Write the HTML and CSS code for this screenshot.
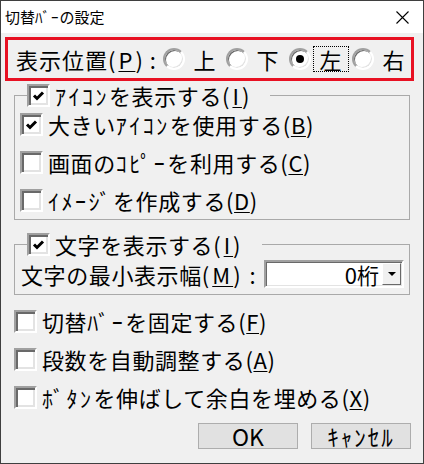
FILE: index.html
```html
<!DOCTYPE html>
<html lang="ja">
<head>
  <meta charset="UTF-8" />
  <title>切替ﾊﾞｰの設定</title>
  <link rel="stylesheet" href="styles.css">
</head>
<body>
  <div class="window">
    <div class="titlebar">
      <span class="title">切替<span class="hw-title">ﾊﾞｰ</span>の設定</span>
      <svg class="close" width="13" height="13" viewBox="0 0 13 13">
        <path d="M0.5 0.5 L12.5 12.5 M12.5 0.5 L0.5 12.5" stroke="#000" stroke-width="1.1" fill="none"/>
      </svg>
    </div>

    <div class="content">
      <!-- Position row (highlighted) -->
      <div class="position-row">
        <span class="pos-label">表示位置<span class="wide">(<u>P</u>)</span></span><span class="colon">:</span>
        <span class="radio-opt"><span class="radio"></span><span class="opt-text">上</span></span>
        <span class="radio-opt"><span class="radio"></span><span class="opt-text">下</span></span>
        <span class="radio-opt"><span class="radio on"></span><span class="opt-text focus">左</span></span>
        <span class="radio-opt"><span class="radio"></span><span class="opt-text">右</span></span>
      </div>

      <!-- Icon group -->
      <fieldset class="group group-icon">
        <legend class="group-legend">
          <span class="cb on"><svg width="19" height="19" viewBox="0 0 19 19"><path d="M5 9.5 L8 12.5 L14 6.5" stroke="#000" stroke-width="3" fill="none"/></svg></span>
          <span class="cb-text"><span class="hw">ｱｲｺﾝ</span>を表示する<span class="wide">(<u>I</u>)</span></span>
        </legend>
        <div class="check-row">
          <span class="cb on"><svg width="19" height="19" viewBox="0 0 19 19"><path d="M5 9.5 L8 12.5 L14 6.5" stroke="#000" stroke-width="3" fill="none"/></svg></span>
          <span class="cb-text">大きい<span class="hw">ｱｲｺﾝ</span>を使用する(<u>B</u>)</span>
        </div>
        <div class="check-row">
          <span class="cb"></span>
          <span class="cb-text">画面の<span class="hw">ｺﾋﾟｰ</span>を利用する(<u>C</u>)</span>
        </div>
        <div class="check-row">
          <span class="cb"></span>
          <span class="cb-text"><span class="hw">ｲﾒｰｼﾞ</span>を作成する(<u>D</u>)</span>
        </div>
      </fieldset>

      <!-- Text group -->
      <fieldset class="group group-text">
        <legend class="group-legend">
          <span class="cb on"><svg width="19" height="19" viewBox="0 0 19 19"><path d="M5 9.5 L8 12.5 L14 6.5" stroke="#000" stroke-width="3" fill="none"/></svg></span>
          <span class="cb-text">文字を表示する<span class="wide">(<u>I</u>)</span></span>
        </legend>
        <div class="width-row">
          <span class="width-label">文字の最小表示幅<span class="wide">(<u>M</u>)</span><span class="colon">:</span></span>
          <div class="combo">
            <span class="combo-value">0桁</span>
            <span class="combo-btn"><span class="arrow"></span></span>
          </div>
        </div>
      </fieldset>

      <!-- Other options -->
      <div class="options">
        <div class="check-row">
          <span class="cb"></span>
          <span class="cb-text">切替<span class="hw">ﾊﾞｰ</span>を固定する(<u>F</u>)</span>
        </div>
        <div class="check-row">
          <span class="cb"></span>
          <span class="cb-text">段数を自動調整する(<u>A</u>)</span>
        </div>
        <div class="check-row">
          <span class="cb"></span>
          <span class="cb-text"><span class="hw">ﾎﾞﾀﾝ</span>を伸ばして余白を埋める(<u>X</u>)</span>
        </div>
      </div>

      <div class="buttons">
        <button class="btn">OK</button>
        <button class="btn"><span class="hw-btn">ｷｬﾝｾﾙ</span></button>
      </div>
    </div>
  </div>
</body>
</html>
```

FILE: styles.css
```css
body {
  margin: 0;
  font-family: "Noto Sans CJK JP", "Noto Sans", sans-serif;
  color: #000;
}

.window {
  width: 424px;
  height: 464px;
  box-sizing: border-box;
  border: 1px solid #3f3f3f;
  background: #f0f0f0;
  display: flex;
  flex-direction: column;
}

.titlebar {
  height: 32px;
  flex: none;
  background: #fff;
  display: flex;
  align-items: center;
  justify-content: space-between;
  padding: 0 14px 0 4px;
}

.title {
  font-size: 15px;
  line-height: 20px;
}

.hw-title {
  letter-spacing: 1px;
}

.content {
  display: flex;
  flex-direction: column;
  font-size: 22px;
  line-height: 23px;
  letter-spacing: 0.6px;
}

.hw {
  letter-spacing: 2.5px;
}

.wide {
  letter-spacing: 3px;
}

u {
  text-decoration-thickness: 1px;
  text-underline-offset: 2px;
}

/* Position row */
.position-row {
  margin: 4px 9px 0 4px;
  height: 44px;
  box-sizing: border-box;
  border: 3px solid #e81123;
  display: flex;
  align-items: center;
  padding-left: 8px;
  white-space: nowrap;
}

.pos-label {
  flex: none;
  letter-spacing: 1px;
}

.colon {
  margin: 0 6px 0 4px;
}

.radio-opt {
  display: flex;
  align-items: center;
  flex: none;
  margin-right: 3px;
}

.radio {
  width: 22px;
  height: 22px;
  box-sizing: border-box;
  border-radius: 50%;
  border: 2px solid;
  border-color: #a0a0a0 #fff #fff #a0a0a0;
  box-shadow: inset 1px 1px 0 #696969, inset -1px -1px 0 #e3e3e3;
  background: #fff;
  display: flex;
  align-items: center;
  justify-content: center;
}

.radio.on::after {
  content: '';
  width: 8px;
  height: 8px;
  border-radius: 50%;
  background: #000;
}

.opt-text {
  margin-left: 2px;
  padding: 0 6px;
  border: 1px dotted transparent;
  line-height: 24px;
  letter-spacing: 0;
}

.opt-text.focus {
  border-color: #000;
}

/* Group boxes */
.group {
  margin: 0;
  min-width: 0;
  border: 1px solid #a9a9a9;
}

.group-icon {
  margin: 3px 13px 0 13px;
  padding: 6px 0 7px 5px;
  display: flex;
  flex-direction: column;
  gap: 15px;
}

.group-text {
  margin: 13px 13px 0 13px;
  padding: 4px 5px 6px 6px;
}

.group-legend {
  display: flex;
  align-items: center;
  padding: 0 18px 0 0;
  margin-left: 7px;
}

.group-text .group-legend {
  margin-left: 6px;
}

.check-row {
  display: flex;
  align-items: center;
  height: 23px;
}

.cb {
  width: 23px;
  height: 23px;
  flex: none;
  box-sizing: border-box;
  border: 2px solid;
  border-color: #a0a0a0 #fff #fff #a0a0a0;
  box-shadow: inset 2px 2px 0 #696969, inset -2px -2px 0 #e3e3e3;
  background: #fff;
}

.cb svg {
  display: block;
}

.cb-text {
  margin-left: 5px;
  white-space: nowrap;
}

/* Minimum width row */
.width-row {
  display: flex;
  align-items: center;
}

.width-label {
  white-space: nowrap;
}

.width-label .colon {
  margin: 0 0 0 6px;
}

.combo {
  margin-left: auto;
  width: 140px;
  height: 28px;
  flex: none;
  box-sizing: border-box;
  border: 2px solid;
  border-color: #a0a0a0 #fff #fff #a0a0a0;
  box-shadow: inset 1px 1px 0 #696969, inset -1px -1px 0 #e3e3e3;
  background: #fff;
  display: flex;
  padding: 1px;
}

.combo-value {
  flex: 1;
  text-align: right;
  padding-right: 3px;
  line-height: 22px;
  letter-spacing: 0;
}

.combo-btn {
  width: 19px;
  box-sizing: border-box;
  border: 1px solid;
  border-color: #fff #696969 #696969 #fff;
  background: #f0f0f0;
  display: flex;
  align-items: center;
  justify-content: center;
}

.arrow {
  width: 0;
  height: 0;
  border-left: 4px solid transparent;
  border-right: 4px solid transparent;
  border-top: 4px solid #000;
}

/* Other options */
.options {
  margin: 15px 0 0 13px;
  display: flex;
  flex-direction: column;
  gap: 15px;
}

/* Buttons */
.buttons {
  display: flex;
  justify-content: flex-end;
  gap: 13px;
  margin: 14px 12px 0 0;
}

.btn {
  width: 100px;
  height: 26px;
  padding: 0;
  border: 1px solid #adadad;
  background: #e1e1e1;
  font: inherit;
  font-size: 23px;
  line-height: 24px;
  letter-spacing: 0;
  color: #000;
}

.hw-btn {
  letter-spacing: 2px;
}
```
